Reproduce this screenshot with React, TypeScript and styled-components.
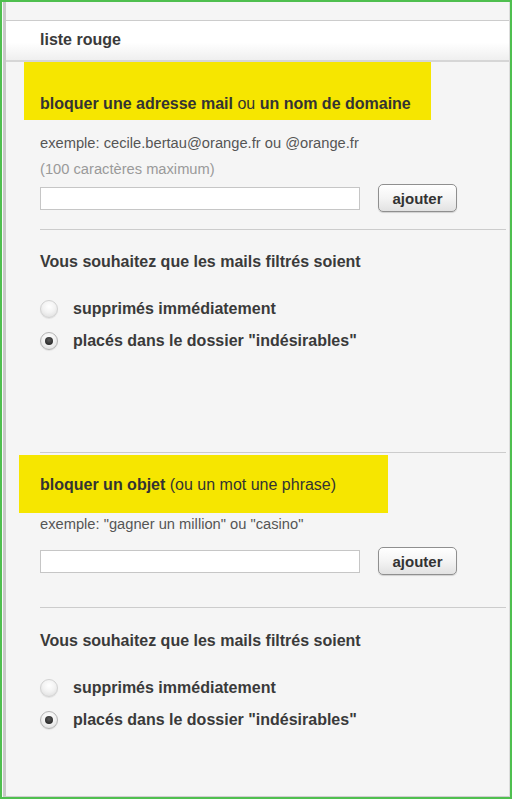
import React from 'react';
import styled, { createGlobalStyle } from 'styled-components';

const GlobalStyle = createGlobalStyle`
  html, body {
    margin: 0;
    padding: 0;
  }
  body {
    font-family: "Liberation Sans", Arial, sans-serif;
    color: #333;
  }
  * {
    box-sizing: border-box;
  }
`;

const Frame = styled.div`
  width: 512px;
  height: 799px;
  border: 2px solid #4fbf4f;
  background: #fafafa;
  display: flex;
  overflow: hidden;
`;

const Panel = styled.div`
  flex: 1;
  margin-left: 1px;
  padding-top: 18px;
  background: #f5f5f5;
  border-left: 3px solid #c9c9c9;
  border-right: 1px solid #dcdcdc;
  border-bottom: 1px solid #cfcfcf;
  display: flex;
  flex-direction: column;
`;

const Header = styled.div`
  height: 42px;
  padding-left: 34px;
  line-height: 38px;
  font-size: 16px;
  font-weight: bold;
  color: #3a3a3a;
  background: linear-gradient(#ffffff 0%, #ffffff 55%, #efefef 100%);
  border-top: 1px solid #cccccc;
  border-bottom: 2px solid #d6d6d6;
`;

const Highlight = styled.div<{ $offset: number; $width: number; $top: number; $gap: number }>`
  margin-top: ${(p) => p.$gap}px;
  margin-left: ${(p) => p.$offset}px;
  width: ${(p) => p.$width}px;
  height: 58px;
  padding-top: ${(p) => p.$top}px;
  padding-left: ${(p) => 34 - p.$offset}px;
  background: #f6e600;
  font-size: 16px;
  line-height: 17px;
  color: #333;
  white-space: nowrap;
  b {
    font-weight: bold;
  }
`;

const Note = styled.div<{ $muted?: boolean; $gap: number }>`
  margin-top: ${(p) => p.$gap}px;
  padding-left: 34px;
  font-size: 14.7px;
  line-height: 16px;
  color: ${(p) => (p.$muted ? '#9a9a9a' : '#555555')};
`;

const EntryRow = styled.div<{ $gap: number }>`
  margin-top: ${(p) => p.$gap}px;
  padding-left: 34px;
  height: 28px;
  display: flex;
  align-items: center;
`;

const TextField = styled.input`
  width: 320px;
  height: 23px;
  margin: 0;
  padding: 2px 4px;
  border: 1px solid #c6c6c6;
  background: #ffffff;
  font: 13px "Liberation Sans", Arial, sans-serif;
  outline: none;
`;

const AddButton = styled.button`
  margin-left: 18px;
  width: 79px;
  height: 28px;
  padding: 0;
  border: 1px solid #8f8f8f;
  border-radius: 5px;
  background: linear-gradient(#ffffff 0%, #f4f4f4 50%, #e2e2e2 100%);
  box-shadow: 0 1px 1px rgba(0, 0, 0, 0.15);
  font: bold 15px "Liberation Sans", Arial, sans-serif;
  color: #333;
`;

const Divider = styled.div<{ $gap: number }>`
  margin-top: ${(p) => p.$gap}px;
  margin-left: 34px;
  margin-right: 3px;
  height: 1px;
  background: #cccccc;
`;

const Question = styled.div<{ $gap: number }>`
  margin-top: ${(p) => p.$gap}px;
  padding-left: 34px;
  font-size: 16px;
  line-height: 17px;
  font-weight: bold;
  color: #3a3a3a;
`;

const Options = styled.div<{ $gap: number }>`
  margin-top: ${(p) => p.$gap}px;
  display: flex;
  flex-direction: column;
`;

const Option = styled.label`
  height: 32px;
  padding-left: 34px;
  display: flex;
  align-items: center;
  font-size: 16px;
  font-weight: bold;
  color: #3a3a3a;
`;

const RadioDot = styled.span<{ $checked?: boolean }>`
  position: relative;
  width: 18px;
  height: 18px;
  margin-right: 15px;
  border-radius: 50%;
  border: 1px solid ${(p) => (p.$checked ? '#b5b5b5' : '#d2d2d2')};
  background: radial-gradient(circle at 50% 35%, #ffffff 0%, #f3f3f3 45%, #d9d9d9 100%);
  box-shadow: 0 1px 1px rgba(0, 0, 0, 0.08);
  &::after {
    content: '';
    display: ${(p) => (p.$checked ? 'block' : 'none')};
    position: absolute;
    left: 4px;
    top: 4px;
    width: 8px;
    height: 8px;
    border-radius: 50%;
    background: radial-gradient(circle at 50% 40%, #5a5a5a 0%, #1a1a1a 100%);
  }
`;

const Spacer = styled.div<{ $size: number }>`
  height: ${(p) => p.$size}px;
  flex-shrink: 0;
`;

const FilterChoice = ({ gap }: { gap: number }) => (
  <Options $gap={gap}>
    <Option>
      <RadioDot />
      supprimés immédiatement
    </Option>
    <Option>
      <RadioDot $checked />
      placés dans le dossier "indésirables"
    </Option>
  </Options>
);

export default function App() {
  return (
    <>
      <GlobalStyle />
      <Frame>
        <Panel>
          <Header>liste rouge</Header>

          <Highlight $gap={0} $offset={18} $width={407} $top={33}>
            <b>bloquer une adresse mail</b> ou <b>un nom de domaine</b>
          </Highlight>
          <Note $gap={15}>exemple: cecile.bertau@orange.fr ou @orange.fr</Note>
          <Note $gap={10} $muted>
            (100 caractères maximum)
          </Note>
          <EntryRow $gap={7}>
            <TextField type="text" />
            <AddButton>ajouter</AddButton>
          </EntryRow>
          <Divider $gap={17} />
          <Question $gap={23}>Vous souhaitez que les mails filtrés soient</Question>
          <FilterChoice gap={23} />

          <Divider $gap={95} />
          <Highlight $gap={2} $offset={13} $width={369} $top={21}>
            <b>bloquer un objet</b> (ou un mot une phrase)
          </Highlight>
          <Note $gap={3}>exemple: "gagner un million" ou "casino"</Note>
          <EntryRow $gap={15}>
            <TextField type="text" />
            <AddButton>ajouter</AddButton>
          </EntryRow>
          <Divider $gap={32} />
          <Question $gap={24}>Vous souhaitez que les mails filtrés soient</Question>
          <FilterChoice gap={23} />
          <Spacer $size={1} />
        </Panel>
      </Frame>
    </>
  );
}
